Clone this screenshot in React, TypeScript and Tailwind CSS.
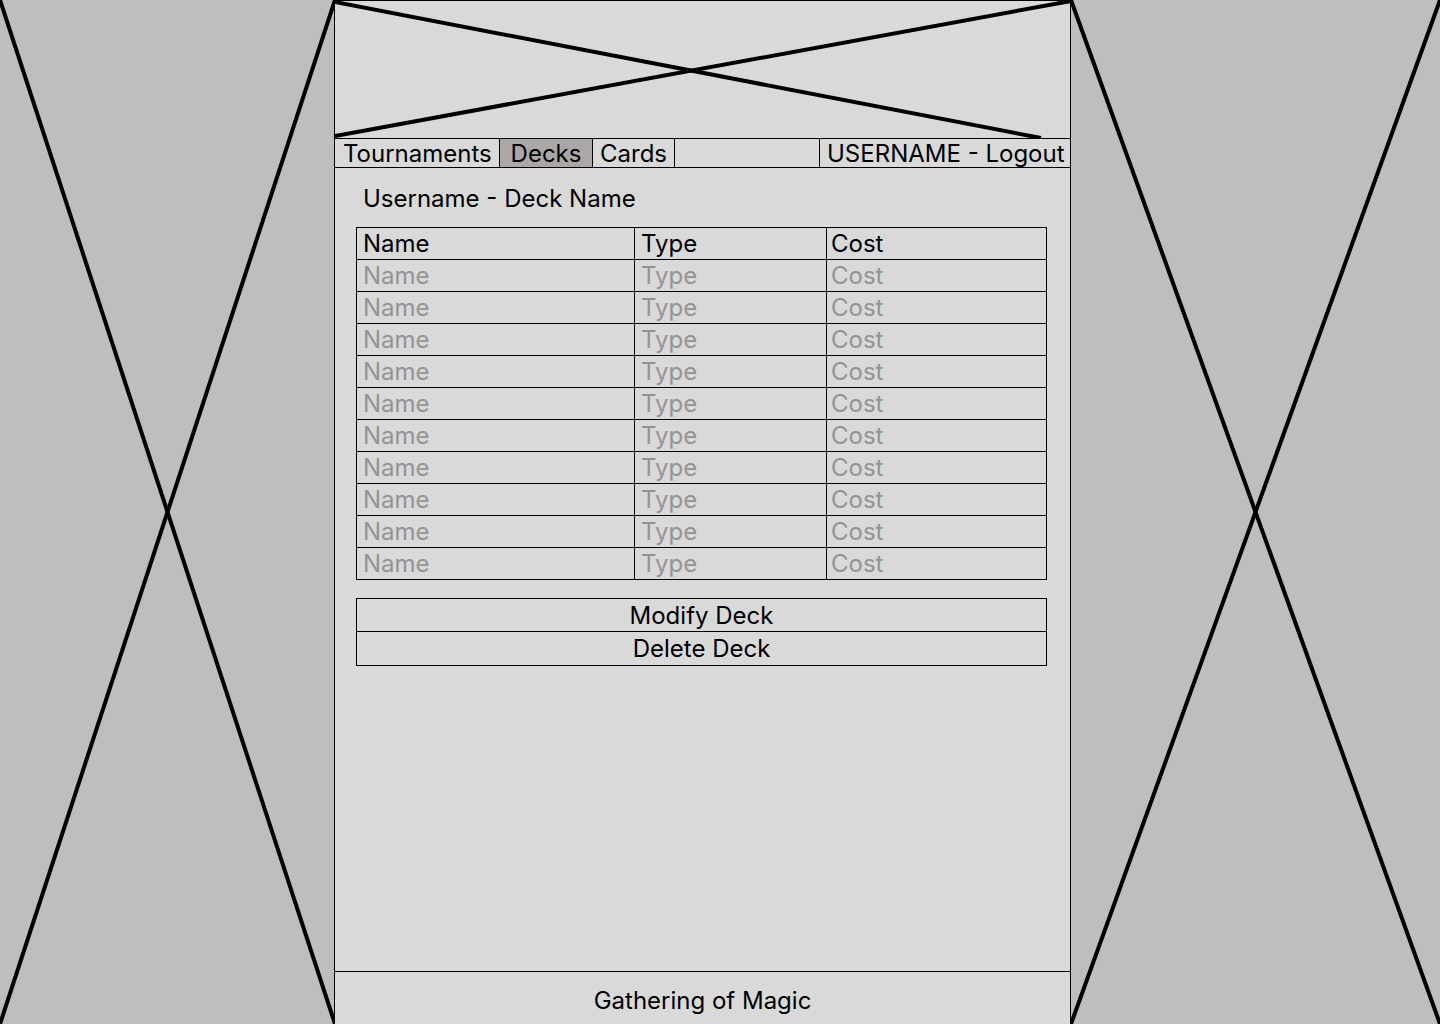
const rows = Array.from({ length: 10 });

const SideCross = ({ width }: { width: number }) => (
  <div className="relative h-full shrink-0" style={{ width }}>
    <svg className="absolute inset-0 h-full w-full" viewBox={`0 0 ${width} 1024`} preserveAspectRatio="none">
      <line x1="0" y1="0" x2={width + 1} y2="1024" stroke="black" strokeWidth="4" />
      <line x1={width + 1} y1="0" x2="0" y2="1024" stroke="black" strokeWidth="4" />
    </svg>
  </div>
);

const Cell = ({ children, muted, last }: { children: string; muted?: boolean; last?: boolean }) => (
  <div
    className={`flex h-[32px] items-center border-r border-b border-black text-[24px] leading-none ${
      last ? "pl-[4px]" : "pl-[6px]"
    } ${muted ? "text-[#949494]" : "text-black"}`}
  >
    {children}
  </div>
);

export default function App() {
  return (
    <div className="flex h-[1024px] w-[1440px] overflow-hidden bg-[#bebebe] font-['Inter',sans-serif] text-black">
      <SideCross width={334} />

      <main className="flex h-full w-[737px] shrink-0 flex-col border-x border-black bg-[#d9d9d9]">
        {/* banner placeholder */}
        <div className="relative h-[138px] border-t border-black">
          <svg className="absolute inset-0 h-full w-full" viewBox="0 0 735 137">
            <line x1="0" y1="1" x2="706" y2="137" stroke="black" strokeWidth="4" />
            <line x1="0" y1="135" x2="736" y2="0" stroke="black" strokeWidth="4" />
          </svg>
        </div>

        {/* nav */}
        <nav className="flex h-[30px] border-y border-black text-[24px] leading-none">
          <div className="flex w-[165px] items-center border-r border-black pl-[8px] pt-[2px]">Tournaments</div>
          <div className="flex w-[93px] items-center justify-center border-r border-black bg-[#aba7a7] pt-[2px]">
            Decks
          </div>
          <div className="flex w-[82px] items-center border-r border-black pl-[7px] pt-[2px]">Cards</div>
          <div className="w-[145px] border-r border-black" />
          <div className="flex flex-1 items-center pl-[7px] pt-[2px]">USERNAME - Logout</div>
        </nav>

        {/* content */}
        <section className="flex flex-1 flex-col pt-[17px]">
          <h1 className="pl-[28px] text-[24px] leading-[28px]">Username - Deck Name</h1>

          <div className="ml-[21px] mt-[14px] grid w-[691px] grid-cols-[278px_192px_220px] border-t border-l border-black">
            <Cell>Name</Cell>
            <Cell>Type</Cell>
            <Cell last>Cost</Cell>
            {rows.map((_, i) => (
              <div key={i} className="contents">
                <Cell muted>Name</Cell>
                <Cell muted>Type</Cell>
                <Cell muted last>Cost</Cell>
              </div>
            ))}
          </div>

          <div className="ml-[21px] mt-[18px] flex w-[691px] flex-col border border-black text-[24px] leading-none">
            <button type="button" className="flex h-[33px] items-center justify-center border-b border-black pt-[2px]">
              Modify Deck
            </button>
            <button type="button" className="flex h-[33px] items-center justify-center pt-[1px]">
              Delete Deck
            </button>
          </div>
        </section>

        {/* footer */}
        <footer className="flex h-[53px] items-center justify-center border-t border-black pt-[5px] text-[24px] leading-none">
          Gathering of Magic
        </footer>
      </main>

      <div className="relative h-full flex-1">
        <svg className="absolute inset-0 h-full w-full" viewBox="0 0 369 1024" preserveAspectRatio="none">
          <line x1="0" y1="0" x2="369" y2="1024" stroke="black" strokeWidth="4" />
          <line x1="369" y1="0" x2="0" y2="1024" stroke="black" strokeWidth="4" />
        </svg>
      </div>
    </div>
  );
}
